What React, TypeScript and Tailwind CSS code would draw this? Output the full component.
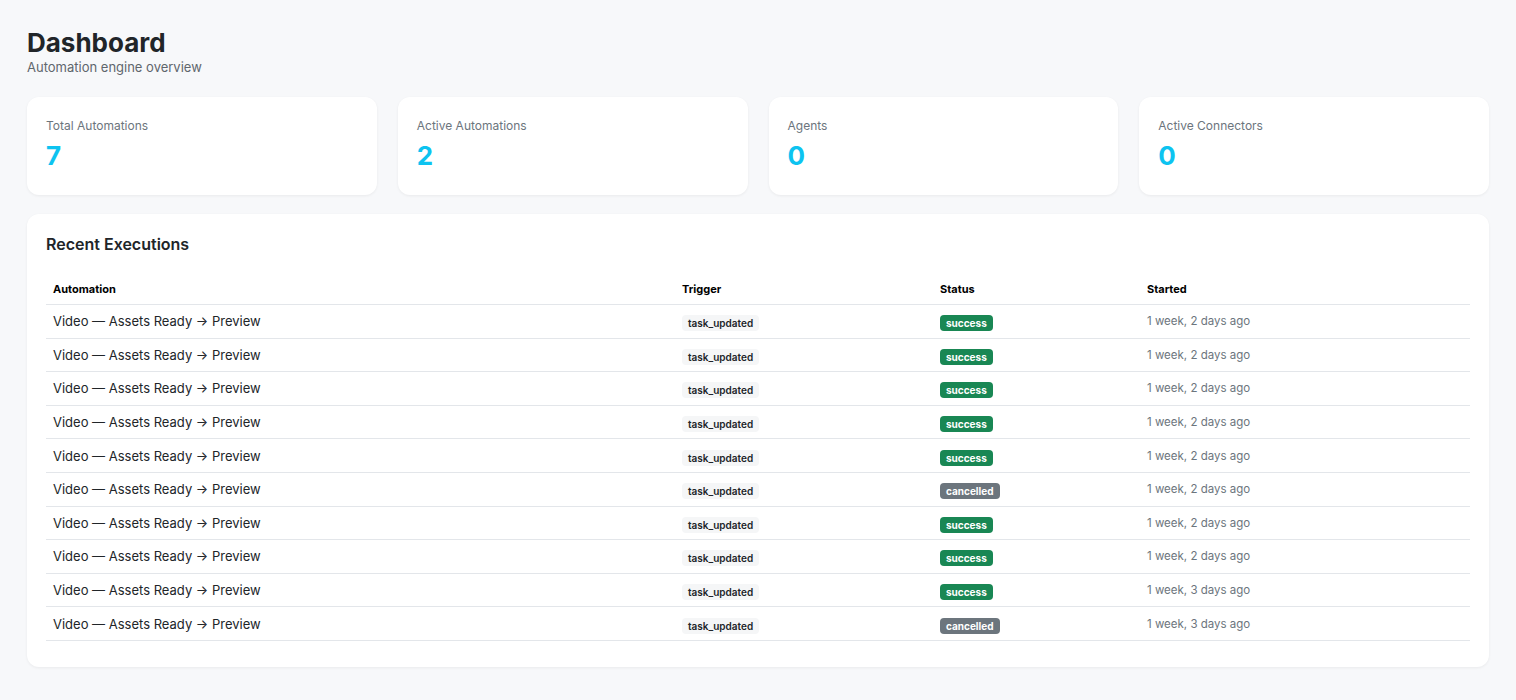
const stats = [
  { label: "Total Automations", value: "7" },
  { label: "Active Automations", value: "2" },
  { label: "Agents", value: "0" },
  { label: "Active Connectors", value: "0" },
];

const rows = [
  { status: "success", started: "1 week, 2 days ago" },
  { status: "success", started: "1 week, 2 days ago" },
  { status: "success", started: "1 week, 2 days ago" },
  { status: "success", started: "1 week, 2 days ago" },
  { status: "success", started: "1 week, 2 days ago" },
  { status: "cancelled", started: "1 week, 2 days ago" },
  { status: "success", started: "1 week, 2 days ago" },
  { status: "success", started: "1 week, 2 days ago" },
  { status: "success", started: "1 week, 3 days ago" },
  { status: "cancelled", started: "1 week, 3 days ago" },
];

function StatCard({ label, value }: { label: string; value: string }) {
  return (
    <div className="h-[98px] rounded-xl bg-white px-[19px] pt-[21px] shadow-[0_1px_3px_rgba(0,0,0,0.06)]">
      <div className="text-[12px] leading-[16px] text-[#6c757d]">{label}</div>
      <div className="mt-[6px] text-[26px] font-bold leading-[32px] text-[#0dc3f0]">{value}</div>
    </div>
  );
}

function StatusBadge({ status }: { status: string }) {
  const color = status === "success" ? "bg-[#198754]" : "bg-[#6c757d]";
  return (
    <span
      className={`${color} inline-block rounded-[4px] px-[6px] py-[2px] text-[10px] font-bold leading-[12px] text-white`}
    >
      {status}
    </span>
  );
}

export default function App() {
  return (
    <div className="min-h-screen bg-[#f7f8fa] px-[27px] pt-[27px] pb-[33px] font-['Inter',sans-serif] text-[#212529]">
      <h1 className="text-[26px] font-bold leading-[32px] text-[#212529]">Dashboard</h1>
      <p className="text-[13px] leading-[16px] text-[#5f666d]">Automation engine overview</p>

      <div className="mt-[22px] grid grid-cols-4 gap-[21px]">
        {stats.map((s) => (
          <StatCard key={s.label} label={s.label} value={s.value} />
        ))}
      </div>

      <div className="mt-[19px] rounded-xl bg-white px-[19px] pt-[20px] pb-[26px] shadow-[0_1px_3px_rgba(0,0,0,0.06)]">
        <h2 className="text-[16px] font-semibold leading-[20px] text-[#212529]">Recent Executions</h2>
        <table className="mt-[20px] w-full border-collapse">
          <thead>
            <tr className="border-b border-[#e3e6ea]">
              <th className="w-[629px] px-[7px] py-[7px] text-left text-[11px] font-bold leading-[16px] text-black">Automation</th>
              <th className="w-[258px] px-[7px] py-[7px] text-left text-[11px] font-bold leading-[16px] text-black">Trigger</th>
              <th className="w-[207px] px-[7px] py-[7px] text-left text-[11px] font-bold leading-[16px] text-black">Status</th>
              <th className="px-[7px] py-[7px] text-left text-[11px] font-bold leading-[16px] text-black">Started</th>
            </tr>
          </thead>
          <tbody>
            {rows.map((r, i) => (
              <tr key={i} className="h-[33.6px] border-b border-[#e3e6ea]">
                <td className="px-[7px] text-[13px] leading-[16px] text-[#212529]">Video — Assets Ready → Preview</td>
                <td className="px-[7px]">
                  <code className="inline-block rounded-[4px] bg-[#f5f6f7] px-[6px] py-[2px] font-['Inter',sans-serif] text-[10px] font-semibold leading-[12px] text-[#212529]">
                    task_updated
                  </code>
                </td>
                <td className="px-[7px]">
                  <StatusBadge status={r.status} />
                </td>
                <td className="px-[7px] text-[11.5px] leading-[16px] text-[#6c757d]">{r.started}</td>
              </tr>
            ))}
          </tbody>
        </table>
      </div>
    </div>
  );
}
